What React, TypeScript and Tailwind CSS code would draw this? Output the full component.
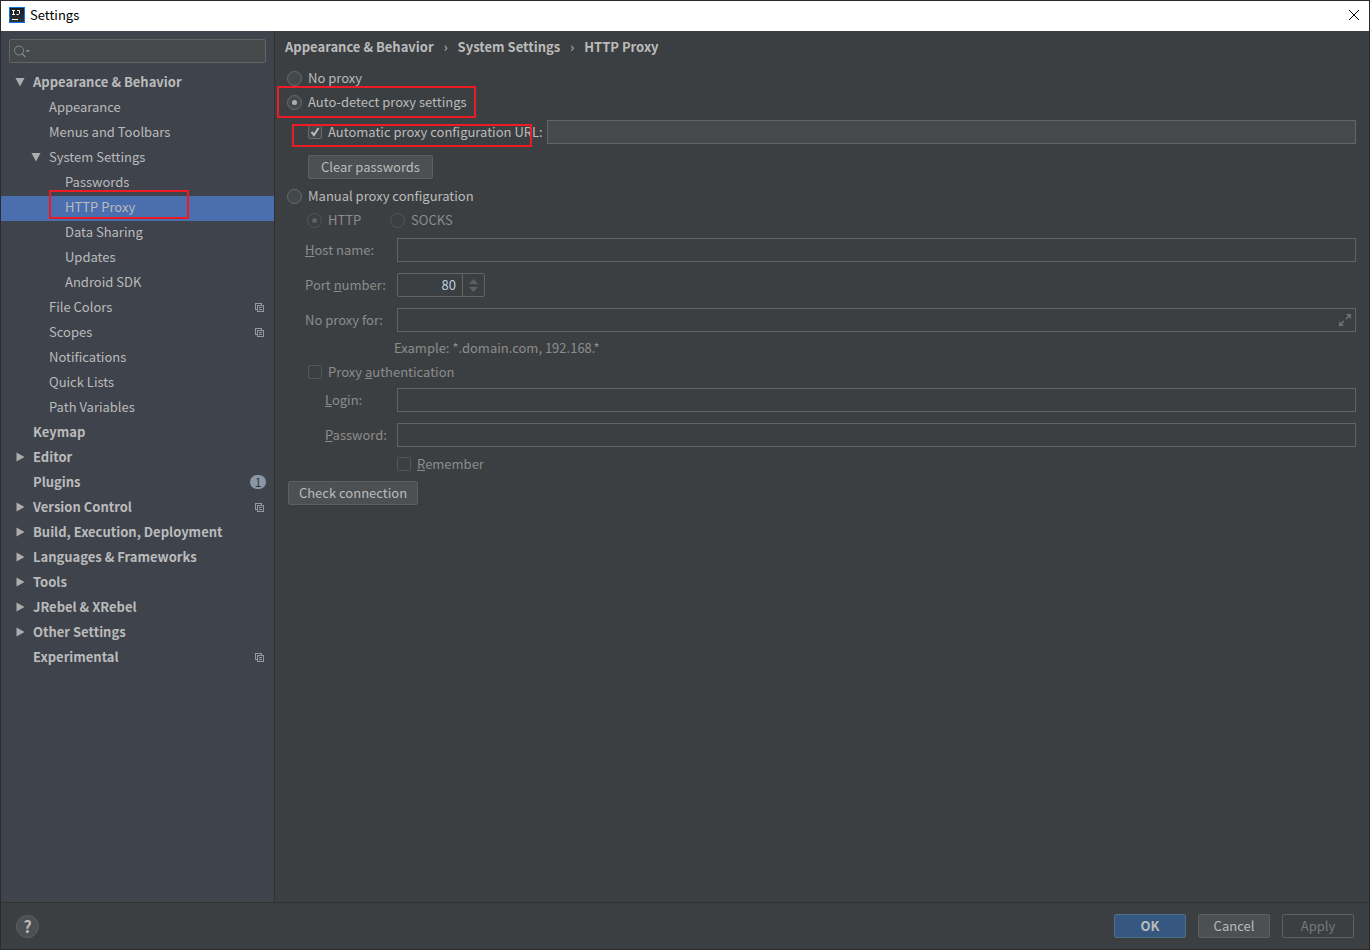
import { ReactNode } from "react";
import clsx from "clsx";

type TreeItem = {
    label: string;
    level: 0 | 1 | 2;
    state?: "open" | "closed";
    project?: boolean;
    badge?: number;
    selected?: boolean;
};

const items: TreeItem[] = [
    { label: "Appearance & Behavior", level: 0, state: "open" },
    { label: "Appearance", level: 1 },
    { label: "Menus and Toolbars", level: 1 },
    { label: "System Settings", level: 1, state: "open" },
    { label: "Passwords", level: 2 },
    { label: "HTTP Proxy", level: 2, selected: true },
    { label: "Data Sharing", level: 2 },
    { label: "Updates", level: 2 },
    { label: "Android SDK", level: 2 },
    { label: "File Colors", level: 1, project: true },
    { label: "Scopes", level: 1, project: true },
    { label: "Notifications", level: 1 },
    { label: "Quick Lists", level: 1 },
    { label: "Path Variables", level: 1 },
    { label: "Keymap", level: 0 },
    { label: "Editor", level: 0, state: "closed" },
    { label: "Plugins", level: 0, badge: 1 },
    { label: "Version Control", level: 0, state: "closed", project: true },
    { label: "Build, Execution, Deployment", level: 0, state: "closed" },
    { label: "Languages & Frameworks", level: 0, state: "closed" },
    { label: "Tools", level: 0, state: "closed" },
    { label: "JRebel & XRebel", level: 0, state: "closed" },
    { label: "Other Settings", level: 0, state: "closed" },
    { label: "Experimental", level: 0, project: true },
];

const indent = ["pl-3.5", "pl-[30px]", "pl-[46px]"];

// Red frame drawn on top of a row
function Highlight({ className }: { className: string }) {
    return <span className={clsx("pointer-events-none absolute border-2 border-[#ed1c24]", className)} />;
}

function Arrow({ state }: { state?: "open" | "closed" }) {
    return (
        <svg viewBox="0 0 10 10" className="size-2.5 shrink-0 fill-[#adadad]">
            {state === "open" && <path d="M0.5 1H9.5L5 9.5z" />}
            {state === "closed" && <path d="M1.5 0.5V9.5L9.5 5z" />}
        </svg>
    );
}

function ProjectIcon() {
    return (
        <svg viewBox="0 0 9 9" className="mr-0.5 size-[9px] fill-none stroke-[#9299a3]" shapeRendering="crispEdges">
            <path d="M2 6.5H0.5V0.5H6.5V2" />
            <path d="M2.5 2.5H8.5V8.5H2.5zM4 4.5H7M4 6.5H7" />
        </svg>
    );
}

function TreeRow({ item }: { item: TreeItem }) {
    return (
        <li className={clsx("relative", item.selected && "bg-[#4b6eaf]")}>
            <a
                href="#"
                aria-current={item.selected ? "page" : undefined}
                className={clsx("flex h-[25px] items-center pr-2 pb-[3px]", indent[item.level], item.level === 0 && "font-bold")}
            >
                <Arrow state={item.state} />
                <span className="ml-2 grow whitespace-nowrap">{item.label}</span>
                {item.project && <ProjectIcon />}
                {item.badge && (
                    <span className="flex h-3.5 w-4 items-center justify-center rounded-full bg-[#8b97a5] text-xs font-normal text-[#2f3a48]">
                        {item.badge}
                    </span>
                )}
            </a>
            {item.selected && <Highlight className="-top-1.5 left-12 h-[29px] w-[140px]" />}
        </li>
    );
}

type ChoiceProps = {
    children: ReactNode;
    name?: string;
    checked?: boolean;
    disabled?: boolean;
};

function Radio({ children, name, checked, disabled }: ChoiceProps) {
    return (
        <label className={clsx("flex h-6 items-center gap-1.5 whitespace-nowrap", disabled && "text-[#8c8c8c]")}>
            <input
                type="radio"
                name={name}
                defaultChecked={checked}
                disabled={disabled}
                className="grid size-[15px] appearance-none place-content-center rounded-full border border-[#6b6b6b] bg-[#43494a] before:size-[5px] before:rounded-full checked:before:bg-[#adadad] disabled:border-[#545556] disabled:bg-transparent disabled:checked:before:bg-[#606060]"
            />
            <span>{children}</span>
        </label>
    );
}

function Checkbox({ children, checked, disabled }: ChoiceProps) {
    return (
        <label className={clsx("flex h-6 items-center gap-1.5 whitespace-nowrap", disabled && "text-[#8c8c8c]")}>
            <span className="grid">
                <input
                    type="checkbox"
                    defaultChecked={checked}
                    disabled={disabled}
                    className="peer col-start-1 row-start-1 size-3.5 appearance-none rounded-xs border border-[#6b6b6b] bg-[#43494a] disabled:border-[#545556] disabled:bg-transparent"
                />
                <svg
                    viewBox="0 0 14 14"
                    className="pointer-events-none invisible col-start-1 row-start-1 size-3.5 fill-none stroke-[#bbbbbb] stroke-2 peer-checked:visible"
                >
                    <path d="M3.5 7L6 10L10.5 3" />
                </svg>
            </span>
            <span>{children}</span>
        </label>
    );
}

const fieldClass = "h-6 min-w-0 grow border border-[#646464] px-1.5 outline-none";
const buttonClass = "h-6 rounded-xs border border-[#5e6060] bg-[#4c5052] text-center whitespace-nowrap shadow-xs";

export default function App() {
    return (
        <div className="flex min-h-screen flex-col border border-[#2b2b2b] bg-[#3c3f41] font-['Noto_Sans_CJK_SC','Open_Sans',sans-serif] text-[13px] leading-5 text-[#bbbbbb]">
            <header className="flex h-[30px] items-center bg-white pr-[9px] pb-0.5 pl-2 text-black">
                <svg viewBox="0 0 16 16" className="size-4">
                    <defs>
                        <linearGradient id="logo" x1="0" y1="0" x2="0" y2="1">
                            <stop offset="0" stopColor="#1a1a1a" />
                            <stop offset="1" stopColor="#2b3440" />
                        </linearGradient>
                    </defs>
                    <rect width="16" height="16" fill="#0b74e6" />
                    <rect x="1" y="1" width="14" height="14" fill="url(#logo)" />
                    <path d="M3 3.5H6M4.5 3.5V7.5M3 7.5H6M8 3.5H10.5V6.5L9.5 7.5H7.5" fill="none" stroke="#fff" />
                    <path d="M3 12.5H9" stroke="#fff" />
                </svg>
                <h1 className="ml-[5px] grow">Settings</h1>
                <button type="button" aria-label="Close">
                    <svg viewBox="0 0 12 12" className="size-3 fill-none stroke-black">
                        <path d="M1 1L11 11M11 1L1 11" />
                    </svg>
                </button>
            </header>

            <div className="flex grow">
                <aside className="w-[274px] shrink-0 border-r border-[#323232] bg-[#3f434c] pt-2">
                    <div className="mr-2 ml-2 flex h-6 items-center rounded-xs border border-[#646464] bg-[#45494a] pl-1">
                        <svg viewBox="0 0 17 13" className="h-[13px] w-[17px] shrink-0 fill-none stroke-[#7f8b91]">
                            <circle cx="5" cy="5.5" r="4.5" />
                            <path d="M8 8.5L11.5 12" strokeWidth="1.5" />
                            <path d="M11.5 5H16L13.75 7.5z" className="fill-[#7f8b91] stroke-none" />
                        </svg>
                        <input type="text" aria-label="Search settings" className="min-w-0 grow px-1 outline-none" />
                    </div>
                    <ul className="mt-2">
                        {items.map((item) => (
                            <TreeRow key={item.label} item={item} />
                        ))}
                    </ul>
                </aside>

                <main className="min-w-0 grow pr-[13px] pl-2.5">
                    <nav className="flex h-8 items-center font-bold whitespace-nowrap">
                        <a href="#">Appearance &amp; Behavior</a>
                        <span className="w-6 text-center font-normal">›</span>
                        <a href="#">System Settings</a>
                        <span className="w-6 text-center font-normal">›</span>
                        <a href="#">HTTP Proxy</a>
                    </nav>

                    <form className="mt-[3px] flex flex-col items-start pl-0.5">
                        <Radio name="proxy">No proxy</Radio>
                        <div className="relative">
                            <Radio name="proxy" checked>
                                Auto-detect proxy settings
                            </Radio>
                            <Highlight className="-top-1 -left-2.5 h-8 w-[199px]" />
                        </div>
                        <div className="relative mt-1.5 flex w-full pl-[21px]">
                            <div className="w-[239px] shrink-0">
                                <Checkbox checked>Automatic proxy configuration URL:</Checkbox>
                            </div>
                            <input type="text" aria-label="Automatic proxy configuration URL" className={clsx(fieldClass, "bg-[#45494a]")} />
                            <Highlight className="top-1 left-[5px] h-[23px] w-60" />
                        </div>
                        <button type="button" className={clsx(buttonClass, "mt-[11px] ml-[21px] w-[125px]")}>
                            Clear passwords
                        </button>

                        <div className="mt-[5px]">
                            <Radio name="proxy">Manual proxy configuration</Radio>
                        </div>
                        <div className="flex pl-5">
                            <div className="w-[83px]">
                                <Radio name="type" checked disabled>
                                    HTTP
                                </Radio>
                            </div>
                            <Radio name="type" disabled>
                                SOCKS
                            </Radio>
                        </div>

                        <div className="mt-1.5 flex w-full flex-col gap-[11px] text-[#8c8c8c]">
                            <div className="flex items-center pl-[18px]">
                                <label htmlFor="host" className="w-[92px] shrink-0">
                                    <u>H</u>ost name:
                                </label>
                                <input id="host" type="text" disabled className={fieldClass} />
                            </div>
                            <div className="flex items-center pl-[18px]">
                                <label htmlFor="port" className="w-[92px] shrink-0">
                                    Port <u>n</u>umber:
                                </label>
                                <div className="flex h-6 w-[88px] rounded-xs border border-[#646464]">
                                    <input
                                        id="port"
                                        type="text"
                                        disabled
                                        defaultValue="80"
                                        className="w-[65px] border-r border-[#646464] pr-1.5 text-right text-[#bbd0e0]"
                                    />
                                    <div className="flex grow flex-col items-center justify-center gap-[3px]">
                                        <button type="button" disabled aria-label="Increase port">
                                            <svg viewBox="0 0 9 5" className="h-[5px] w-[9px] fill-[#5d5f60]">
                                                <path d="M0 5L4.5 0L9 5z" />
                                            </svg>
                                        </button>
                                        <button type="button" disabled aria-label="Decrease port">
                                            <svg viewBox="0 0 9 5" className="h-[5px] w-[9px] fill-[#5d5f60]">
                                                <path d="M0 0L4.5 5L9 0z" />
                                            </svg>
                                        </button>
                                    </div>
                                </div>
                            </div>
                            <div className="flex items-center pl-[18px]">
                                <label htmlFor="exclude" className="w-[92px] shrink-0">
                                    No proxy for:
                                </label>
                                <div className="flex h-6 min-w-0 grow items-center border border-[#646464] pr-1">
                                    <input id="exclude" type="text" disabled className="min-w-0 grow px-1.5" />
                                    <button type="button" disabled aria-label="Expand">
                                        <svg viewBox="0 0 12 12" className="size-3 fill-[#6e7072] stroke-[#6e7072]">
                                            <path d="M7 0H12V5zM0 7V12H5z" stroke="none" />
                                            <path d="M7 5L10 2M2 10L5 7" strokeWidth="1.5" />
                                        </svg>
                                    </button>
                                </div>
                            </div>
                        </div>
                        <p className="mt-1 flex h-6 items-center pl-[107px] text-[#8c8c8c]">Example: *.domain.com, 192.168.*</p>

                        <div className="pl-[21px]">
                            <Checkbox disabled>
                                Proxy <u>a</u>uthentication
                            </Checkbox>
                        </div>
                        <div className="mt-1 flex w-full flex-col gap-[11px] text-[#8c8c8c]">
                            <div className="flex items-center pl-[38px]">
                                <label htmlFor="login" className="w-[72px] shrink-0">
                                    <u>L</u>ogin:
                                </label>
                                <input id="login" type="text" disabled className={fieldClass} />
                            </div>
                            <div className="flex items-center pl-[38px]">
                                <label htmlFor="password" className="w-[72px] shrink-0">
                                    <u>P</u>assword:
                                </label>
                                <input id="password" type="password" disabled className={fieldClass} />
                            </div>
                        </div>
                        <div className="mt-[5px] pl-[110px]">
                            <Checkbox disabled>
                                <u>R</u>emember
                            </Checkbox>
                        </div>
                        <button type="button" className={clsx(buttonClass, "mt-[5px] ml-px w-[130px]")}>
                            Check connection
                        </button>
                    </form>
                </main>
            </div>

            <footer className="flex h-[47px] items-center gap-3 border-t border-[#323232] pr-[15px] pl-[15px]">
                <button
                    type="button"
                    aria-label="Help"
                    className="mr-auto flex size-[23px] items-center justify-center rounded-full border border-[#5e6060] bg-[#4c5052] text-base font-bold"
                >
                    ?
                </button>
                <button type="button" className="h-6 w-[72px] rounded-xs border border-[#4c708c] bg-[#365880] font-bold shadow-xs">
                    OK
                </button>
                <button type="button" className={clsx(buttonClass, "w-[72px]")}>
                    Cancel
                </button>
                <button type="button" disabled className="h-6 w-[72px] rounded-xs border border-[#5e6060] text-[#777777]">
                    Apply
                </button>
            </footer>
        </div>
    );
}
